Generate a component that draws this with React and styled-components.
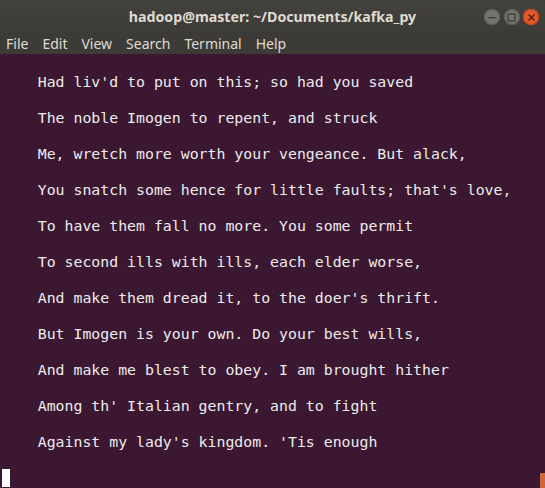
import React from "react"
import styled, { createGlobalStyle } from "styled-components"

const Global = createGlobalStyle`
  html, body { margin: 0; padding: 0; background: #3b1731; overflow: hidden; }
`

const Window = styled.div`
  width: 545px;
  height: 488px;
  display: flex;
  flex-direction: column;
  background: #3c3b37;
  overflow: hidden;
  position: relative;
`

const TitleBar = styled.div`
  height: 32px;
  display: flex;
  align-items: center;
  justify-content: center;
  position: relative;
  background: linear-gradient(#43423e, #3c3b37);
  border-radius: 5px 5px 0 0;
`

const Title = styled.div`
  font-family: "Noto Sans", "DejaVu Sans", sans-serif;
  font-weight: bold;
  font-size: 14.2px;
  color: #dfdbd2;
`

const Controls = styled.div`
  position: absolute;
  right: 6px;
  top: 9px;
  display: flex;
  gap: 3.5px;
`

const Btn = styled.div`
  width: 16px;
  height: 16px;
  border-radius: 50%;
  background: ${p => (p.close ? "#e25a2c" : "#74736e")};
  box-shadow: inset 0 0 0 1px ${p => (p.close ? "#c2481f" : "#5d5c58")};
  display: flex;
  align-items: center;
  justify-content: center;
`

const MenuBar = styled.div`
  height: 22px;
  display: flex;
  align-items: center;
  padding-left: 6px;
`

const MenuItem = styled.span`
  font-family: "Noto Sans", "DejaVu Sans", sans-serif;
  font-size: 14px;
  color: #dfdbd2;
  margin-right: 14px;
`

const Term = styled.pre`
  flex: 1;
  margin: 0;
  background: #3b1731;
  padding: 19px 0 0 2px;
  font-family: "DejaVu Sans Mono", monospace;
  font-size: 14.85px;
  line-height: 18px;
  color: #ececec;
`

const Cursor = styled.span`
  display: inline-block;
  width: 8px;
  height: 18px;
  background: #ffffff;
  vertical-align: top;
`

const Scroll = styled.div`
  position: absolute;
  right: 0;
  bottom: 0;
  width: 5px;
  height: 15px;
  background: #cc6640;
`

const lines = [
  "Had liv'd to put on this; so had you saved",
  "The noble Imogen to repent, and struck",
  "Me, wretch more worth your vengeance. But alack,",
  "You snatch some hence for little faults; that's love,",
  "To have them fall no more. You some permit",
  "To second ills with ills, each elder worse,",
  "And make them dread it, to the doer's thrift.",
  "But Imogen is your own. Do your best wills,",
  "And make me blest to obey. I am brought hither",
  "Among th' Italian gentry, and to fight",
  "Against my lady's kingdom. 'Tis enough",
]

const menus = ["File", "Edit", "View", "Search", "Terminal", "Help"]

export default function App() {
  return (
    <Window>
      <Global />
      <TitleBar>
        <Title>hadoop@master: ~/Documents/kafka_py</Title>
        <Controls>
          <Btn>
            <svg width="9" height="9" viewBox="0 0 9 9">
              <rect x="0.5" y="4" width="8" height="1.2" fill="#3c3b37" />
            </svg>
          </Btn>
          <Btn>
            <svg width="9" height="9" viewBox="0 0 9 9">
              <rect x="1" y="1" width="7" height="7" fill="none" stroke="#3c3b37" strokeWidth="1.2" />
            </svg>
          </Btn>
          <Btn close>
            <svg width="9" height="9" viewBox="0 0 9 9">
              <path d="M1.5 1.5L7.5 7.5M7.5 1.5L1.5 7.5" stroke="#4a1a0a" strokeWidth="1.3" />
            </svg>
          </Btn>
        </Controls>
      </TitleBar>
      <MenuBar>
        {menus.map(m => (
          <MenuItem key={m}>{m}</MenuItem>
        ))}
      </MenuBar>
      <Term>
        {lines.map(l => "    " + l + "\n\n").join("")}
        <Cursor />
      </Term>
      <Scroll />
    </Window>
  )
}
